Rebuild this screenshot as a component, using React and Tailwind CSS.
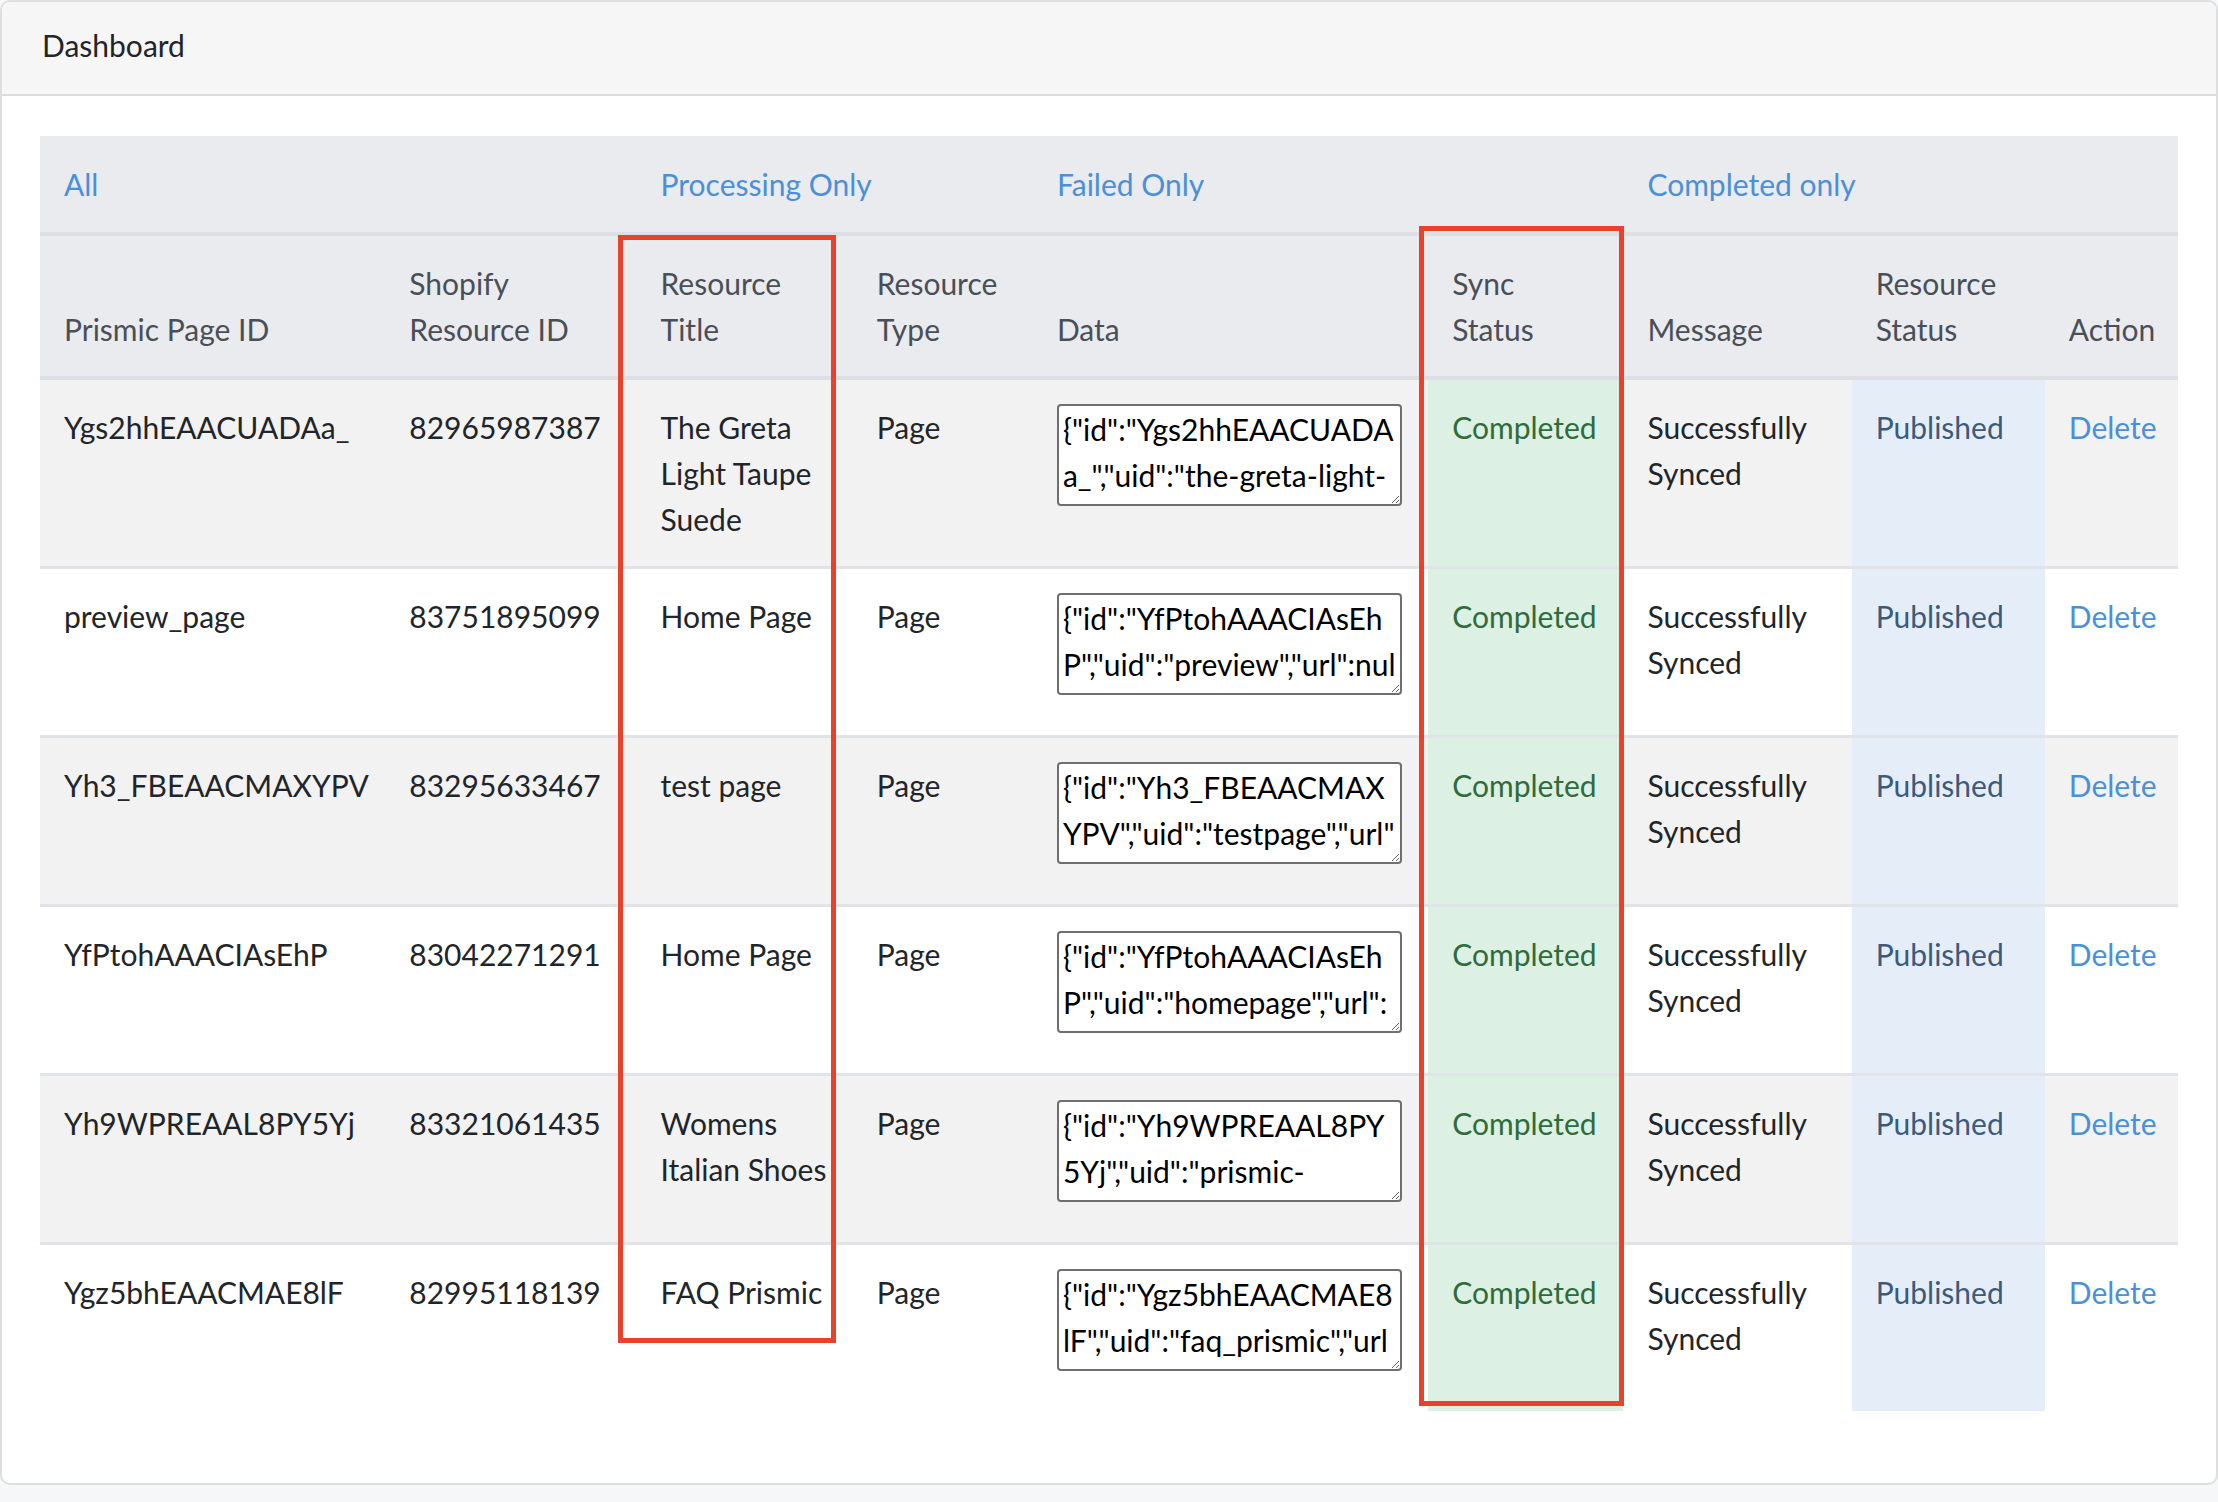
import React from "react";

const rows = [
  {
    pid: "Ygs2hhEAACUADAa_",
    sid: "82965987387",
    title: "The Greta Light Taupe Suede",
    data: '{"id":"Ygs2hhEAACUADAa_","uid":"the-greta-light-taupe-suede","url":null,"type":"page","href":"https://prismic.io/api/v2","lang":"en-us"}',
  },
  {
    pid: "preview_page",
    sid: "83751895099",
    title: "Home Page",
    data: '{"id":"YfPtohAAACIAsEhP","uid":"preview","url":null,"type":"page","href":"https://prismic.io/api/v2","lang":"en-us"}',
  },
  {
    pid: "Yh3_FBEAACMAXYPV",
    sid: "83295633467",
    title: "test page",
    data: '{"id":"Yh3_FBEAACMAXYPV","uid":"testpage","url":null,"type":"page","href":"https://prismic.io/api/v2","lang":"en-us"}',
  },
  {
    pid: "YfPtohAAACIAsEhP",
    sid: "83042271291",
    title: "Home Page",
    data: '{"id":"YfPtohAAACIAsEhP","uid":"homepage","url":null,"type":"page","href":"https://prismic.io/api/v2","lang":"en-us"}',
  },
  {
    pid: "Yh9WPREAAL8PY5Yj",
    sid: "83321061435",
    title: "Womens Italian Shoes",
    data: '{"id":"Yh9WPREAAL8PY5Yj","uid":"prismic-womens-italian-shoes","url":null,"type":"page","lang":"en-us"}',
  },
  {
    pid: "Ygz5bhEAACMAE8lF",
    sid: "82995118139",
    title: "FAQ Prismic",
    data: '{"id":"Ygz5bhEAACMAE8lF","uid":"faq_prismic","url":null,"type":"page","href":"https://prismic.io/api/v2","lang":"en-us"}',
  },
];

const headers = [
  "Prismic Page ID",
  "Shopify Resource ID",
  "Resource Title",
  "Resource Type",
  "Data",
  "Sync Status",
  "Message",
  "Resource Status",
  "Action",
];

export default function App() {
  return (
    <div className="min-h-screen bg-[#f6f7f9] font-['Lato','Open_Sans',sans-serif] text-[30px] leading-[46px] text-[#212529]">
      <div className="bg-white border-2 border-[#dedede] rounded-[10px] overflow-hidden">
        <div className="bg-[#f6f6f6] border-b-2 border-[#dcdcdc] px-[40px] pt-[20px] pb-[26px] text-[#212529]">
          Dashboard
        </div>
        <div className="px-[38px] pt-[40px] pb-[40px]">
          <div className="relative mb-[32px]">
            <table className="w-full table-fixed border-collapse">
              <colgroup>
                <col className="w-[345px]" />
                <col className="w-[251px]" />
                <col className="w-[216px]" />
                <col className="w-[180px]" />
                <col className="w-[395px]" />
                <col className="w-[195px]" />
                <col className="w-[228px]" />
                <col className="w-[193px]" />
                <col className="w-[133px]" />
              </colgroup>
              <thead>
                <tr className="bg-[#e9ebef]">
                  <td colSpan={2} className="px-[24px] py-[25px] border-b-4 border-[#dcdfe4] text-[#4a90d9]">
                    All
                  </td>
                  <td colSpan={2} className="px-[24px] py-[25px] border-b-4 border-[#dcdfe4] text-[#4a90d9]">
                    Processing Only
                  </td>
                  <td colSpan={2} className="px-[24px] py-[25px] border-b-4 border-[#dcdfe4] text-[#4a90d9]">
                    Failed Only
                  </td>
                  <td colSpan={3} className="px-[24px] py-[25px] border-b-4 border-[#dcdfe4] text-[#4a90d9]">
                    Completed only
                  </td>
                </tr>
                <tr className="bg-[#e9ebef]">
                  {headers.map((h) => (
                    <th
                      key={h}
                      className="px-[24px] py-[24px] text-left align-bottom font-normal text-[#4a4f57] border-b-4 border-[#dcdfe4]"
                    >
                      {h}
                    </th>
                  ))}
                </tr>
              </thead>
              <tbody>
                {rows.map((r, i) => {
                  const b = i > 0 ? " border-t-[3px] border-[#e0e3e7]" : "";
                  return (
                    <tr key={i} className={i % 2 === 0 ? "bg-[#f2f2f2]" : "bg-white"}>
                      <td className={"px-[24px] py-[24px] align-top" + b}>{r.pid}</td>
                      <td className={"px-[24px] py-[24px] align-top" + b}>{r.sid}</td>
                      <td className={"px-[24px] py-[24px] align-top" + b}>{r.title}</td>
                      <td className={"px-[24px] py-[24px] align-top" + b}>Page</td>
                      <td className={"px-[24px] py-[24px] align-top" + b}>
                        <textarea
                          readOnly
                          defaultValue={r.data}
                          className="block w-[345px] h-[102px] mb-[16px] border-2 border-[#6f6f6f] rounded-[4px] px-[4px] py-0 bg-white text-black overflow-hidden"
                        />
                      </td>
                      <td className={"px-[24px] py-[24px] align-top bg-[#dcf1e3] text-[#2f6b3b]" + b}>
                        Completed
                      </td>
                      <td className={"px-[24px] py-[24px] align-top" + b}>Successfully Synced</td>
                      <td className={"px-[24px] py-[24px] align-top bg-[#e5eef8] text-[#3b5a7c]" + b}>
                        Published
                      </td>
                      <td className={"px-[24px] py-[24px] align-top text-[#4a90d9]" + b}>Delete</td>
                    </tr>
                  );
                })}
              </tbody>
            </table>
            <div className="absolute left-[578px] top-[99px] w-[218px] h-[1108px] border-[5px] border-[#e8432a] pointer-events-none" />
            <div className="absolute left-[1379px] top-[90px] w-[205px] h-[1180px] border-[5px] border-[#e8432a] pointer-events-none" />
          </div>
        </div>
      </div>
    </div>
  );
}
